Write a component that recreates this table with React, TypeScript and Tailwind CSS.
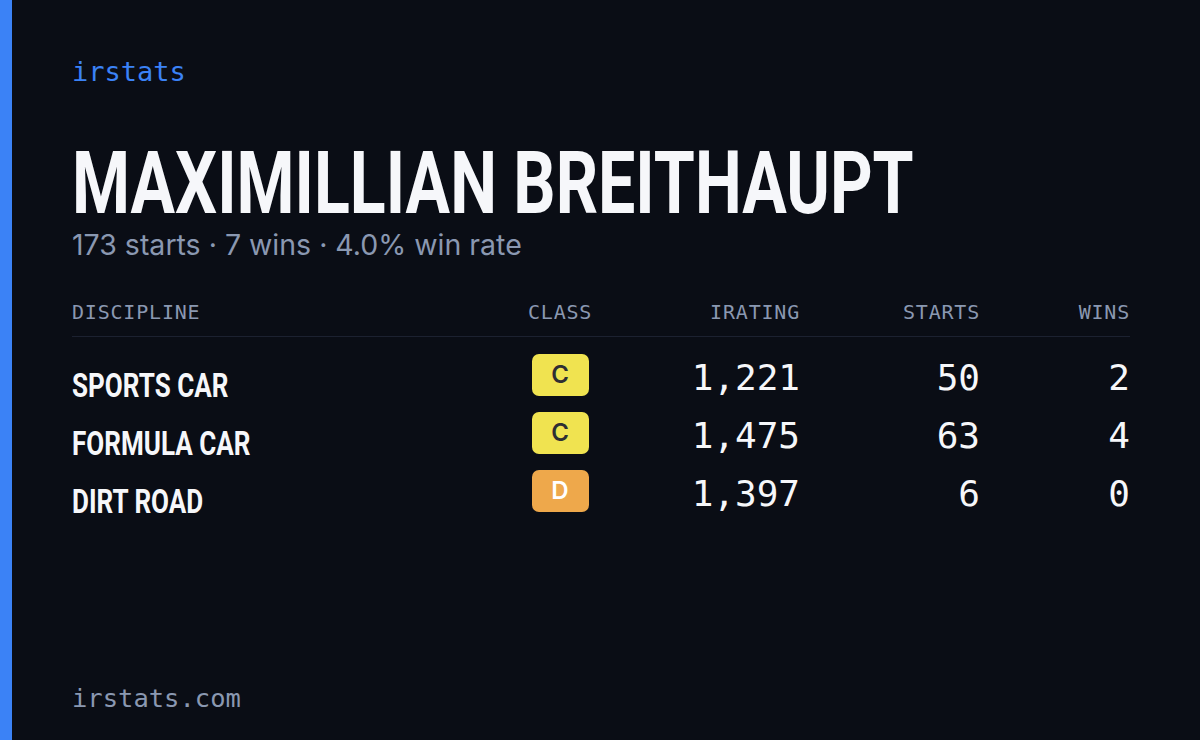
const MONO = "font-['DejaVu_Sans_Mono','Liberation_Mono',monospace]";
const COND = "font-['Roboto',sans-serif] font-bold";

const ROWS = [
  { name: "SPORTS CAR", cls: "C", irating: "1,221", starts: "50", wins: "2" },
  { name: "FORMULA CAR", cls: "C", irating: "1,475", starts: "63", wins: "4" },
  { name: "DIRT ROAD", cls: "D", irating: "1,397", starts: "6", wins: "0" },
];

const Badge = ({ cls }: { cls: string }) => (
  <div
    className={
      cls === "D"
        ? "w-[57px] h-[42px] rounded-[7px] bg-[#eea84b] text-white flex items-center justify-center text-[24px] font-semibold font-['Inter',sans-serif]"
        : "w-[57px] h-[42px] rounded-[7px] bg-[#f0e350] text-[#2e2e33] flex items-center justify-center text-[24px] font-semibold font-['Inter',sans-serif]"
    }
  >
    {cls}
  </div>
);

const App = () => {
  return (
    <div className="w-[1200px] h-[740px] bg-[#0a0d15] flex overflow-hidden">
      <div className="w-[12px] shrink-0 h-full bg-[#3b82f6]" />
      <div className="flex-1 min-w-0 flex flex-col pl-[60px] pr-[70px] pt-[52px] pb-[26px]">
        <div className={`${MONO} text-[27px] text-[#3b82f6] leading-[40px]`}>irstats</div>

        <h1
          className={`${COND} mt-[52px] text-[88px] text-[#f6f7fa] leading-[78px] whitespace-nowrap origin-left scale-x-[0.753]`}
        >
          MAXIMILLIAN BREITHAUPT
        </h1>
        <div className="mt-[5px] font-['Inter',sans-serif] text-[28.5px] text-[#8a98b1] leading-[36px]">
          173 starts · 7 wins · 4.0% win rate
        </div>

        <div className="mt-[35px]">
          <div
            className={`${MONO} grid grid-cols-[456px_64px_208px_180px_150px] text-[20px] text-[#8a98b1] tracking-[0.8px] leading-[28px] pb-[10px] border-b border-[#1c2130]`}
          >
            <div>DISCIPLINE</div>
            <div className="text-center">CLASS</div>
            <div className="text-right">IRATING</div>
            <div className="text-right">STARTS</div>
            <div className="text-right">WINS</div>
          </div>
          <div className="pt-[17px] flex flex-col gap-[16px]">
            {ROWS.map((row) => (
              <div
                key={row.name}
                className="grid grid-cols-[456px_64px_208px_180px_150px] items-start h-[42px] text-[#f6f7fa]"
              >
                <div className={`${COND} text-[34px] leading-none pt-[14px] whitespace-nowrap origin-left scale-x-[0.766]`}>
                  {row.name}
                </div>
                <div className="flex justify-center">
                  <Badge cls={row.cls} />
                </div>
                <div className={`${MONO} text-right text-[36px] leading-none pt-[6px]`}>{row.irating}</div>
                <div className={`${MONO} text-right text-[36px] leading-none pt-[6px]`}>{row.starts}</div>
                <div className={`${MONO} text-right text-[36px] leading-none pt-[6px]`}>{row.wins}</div>
              </div>
            ))}
          </div>
        </div>

        <div className={`${MONO} mt-auto text-[25.5px] text-[#8a98b1] leading-[32px]`}>irstats.com</div>
      </div>
    </div>
  );
};

export default App;
